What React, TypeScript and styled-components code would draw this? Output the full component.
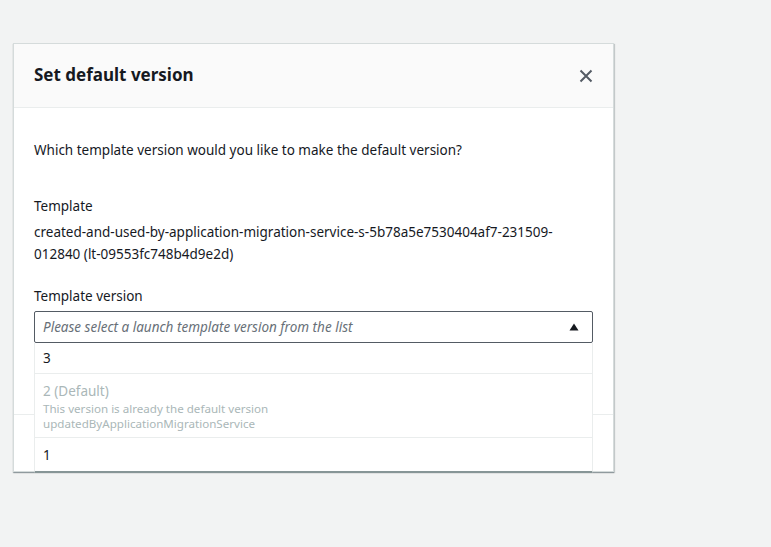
import React from "react";
import styled, { createGlobalStyle } from "styled-components";

const Global = createGlobalStyle`
  html, body { margin: 0; padding: 0; }
  body {
    background: #f2f3f3;
    font-family: "Noto Sans", "Open Sans", Arial, sans-serif;
    color: #16191f;
    width: 771px;
    height: 547px;
    overflow: hidden;
  }
`;

const Page = styled.div`
  padding: 43px 0 0 13px;
`;

const Modal = styled.div`
  width: 599px;
  background: #fff;
  border: 1px solid #d5dbdb;
  box-shadow: 0 1px 1px 0 rgba(0, 28, 36, 0.3), 1px 1px 1px 0 rgba(0, 28, 36, 0.15);
  position: relative;
`;

const Header = styled.div`
  height: 63px;
  background: #fafafa;
  border-bottom: 1px solid #eaeded;
  display: flex;
  align-items: center;
  justify-content: space-between;
  padding: 0 15px 0 20px;
`;

const Title = styled.h2`
  margin: 0 0 2px 0;
  font-size: 17px;
  font-weight: 700;
  line-height: 22px;
  color: #16191f;
`;

const CloseBtn = styled.button`
  border: 0;
  background: none;
  padding: 0;
  width: 24px;
  height: 24px;
  display: flex;
  align-items: center;
  justify-content: center;
  cursor: pointer;
`;

const Body = styled.div`
  padding: 31px 20px 0 20px;
  height: 275px;
  display: flex;
  flex-direction: column;
`;

const Text = styled.p`
  margin: 0;
  font-size: 13.5px;
  line-height: 22px;
`;

const Field = styled.div<{ $top: number }>`
  margin-top: ${(p) => p.$top}px;
  display: flex;
  flex-direction: column;
`;

const Value = styled.div`
  margin-top: 4px;
  font-size: 13.5px;
  line-height: 22px;
  word-break: break-word;
`;

const SelectWrap = styled.div`
  position: relative;
  margin-top: 4px;
`;

const SelectBox = styled.div`
  height: 30px;
  border: 1px solid #545b64;
  border-radius: 2px;
  display: flex;
  align-items: center;
  justify-content: space-between;
  padding: 0 13px 0 8px;
`;

const Placeholder = styled.span`
  font-style: italic;
  font-size: 13.5px;
  color: #687078;
`;

const Dropdown = styled.ul`
  position: absolute;
  left: 0;
  right: 0;
  top: 32px;
  margin: 0;
  padding: 0;
  list-style: none;
  background: #fff;
  border: 1px solid #eaeded;
  border-top: 0;
  border-bottom: 2px solid #879596;
  z-index: 2;
`;

const Option = styled.li<{ $disabled?: boolean; $h: number }>`
  min-height: ${(p) => p.$h}px;
  box-sizing: border-box;
  padding: 4px 8px;
  border-bottom: 1px solid #eaeded;
  display: flex;
  flex-direction: column;
  justify-content: center;
  color: ${(p) => (p.$disabled ? "#aab7b8" : "#16191f")};
  &:last-child { border-bottom: 0; }
`;

const OptLabel = styled.span`
  font-size: 13.5px;
  line-height: 20px;
`;

const OptSub = styled.span`
  font-size: 11.6px;
  line-height: 15px;
`;

const Footer = styled.div`
  height: 56px;
  border-top: 1px solid #eaeded;
`;

export default function App() {
  return (
    <>
      <Global />
      <Page>
        <Modal>
          <Header>
            <Title>Set default version</Title>
            <CloseBtn aria-label="Close">
              <svg width="14" height="14" viewBox="0 0 14 14">
                <path d="M1.5 1.5 L12.5 12.5 M12.5 1.5 L1.5 12.5" stroke="#545b64" strokeWidth="2" fill="none" />
              </svg>
            </CloseBtn>
          </Header>
          <Body>
            <Text>Which template version would you like to make the default version?</Text>
            <Field $top={34}>
              <Text>Template</Text>
              <Value>
                created-and-used-by-application-migration-service-s-5b78a5e7530404af7-231509-012840 (lt-09553fc748b4d9e2d)
              </Value>
            </Field>
            <Field $top={20}>
              <Text>Template version</Text>
              <SelectWrap>
                <SelectBox>
                  <Placeholder>Please select a launch template version from the list</Placeholder>
                  <svg width="10" height="8" viewBox="0 0 10 8">
                    <path d="M5 0.5 L9.5 7.5 L0.5 7.5 Z" fill="#16191f" />
                  </svg>
                </SelectBox>
                <Dropdown>
                  <Option $h={31}>
                    <OptLabel>3</OptLabel>
                  </Option>
                  <Option $h={64} $disabled>
                    <OptLabel>2 (Default)</OptLabel>
                    <OptSub>This version is already the default version</OptSub>
                    <OptSub>updatedByApplicationMigrationService</OptSub>
                  </Option>
                  <Option $h={33}>
                    <OptLabel>1</OptLabel>
                  </Option>
                </Dropdown>
              </SelectWrap>
            </Field>
          </Body>
          <Footer />
        </Modal>
      </Page>
    </>
  );
}
